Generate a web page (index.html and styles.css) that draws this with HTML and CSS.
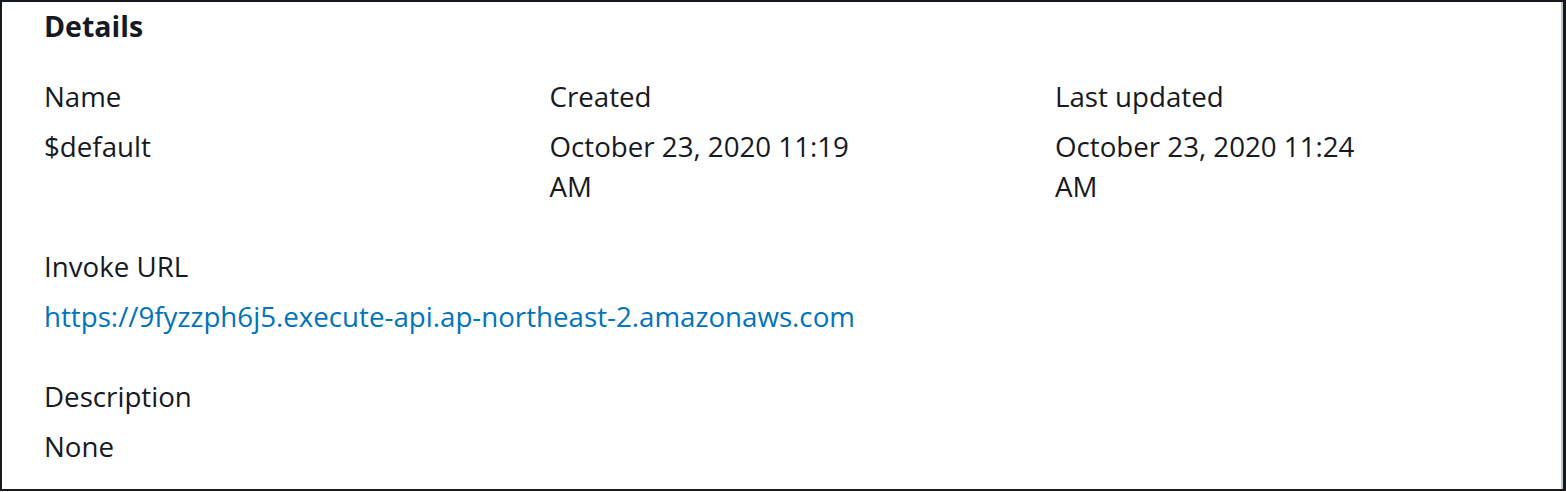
FILE: index.html
```html
<!DOCTYPE html>
<html lang="en">
<head>
<meta charset="utf-8">
<title>Details</title>
<link rel="stylesheet" href="styles.css">
</head>
<body>
<div class="frame">
  <section class="panel">
    <h2 class="title">Details</h2>
    <div class="grid">
      <div class="kv">
        <div class="label">Name</div>
        <div class="value">$default</div>
      </div>
      <div class="kv">
        <div class="label">Created</div>
        <div class="value">October 23, 2020 11:19 AM</div>
      </div>
      <div class="kv">
        <div class="label">Last updated</div>
        <div class="value">October 23, 2020 11:24 AM</div>
      </div>
      <div class="kv full">
        <div class="label">Invoke URL</div>
        <div class="value"><a class="link" href="#">https://9fyzzph6j5.execute-api.ap-northeast-2.amazonaws.com</a></div>
      </div>
      <div class="kv full">
        <div class="label">Description</div>
        <div class="value">None</div>
      </div>
    </div>
  </section>
</div>
</body>
</html>
```
FILE: styles.css
```css
html, body {
  margin: 0;
  padding: 0;
  background: #ffffff;
}
body {
  font-family: "Open Sans", "Noto Sans", sans-serif;
  color: #16191f;
}
.frame {
  box-sizing: border-box;
  width: 1566px;
  height: 491px;
  border: 2px solid #16191f;
  border-right-width: 3px;
  background: #fff;
}
.panel {
  box-sizing: border-box;
  height: 100%;
  padding: 0 0 0 42px;
  border-right: 2px solid #c4c7c9;
}
.title {
  margin: 0;
  font-size: 28.5px;
  font-weight: 700;
  line-height: 48px;
  height: 74px;
  box-sizing: border-box;
}
.grid {
  display: grid;
  grid-template-columns: 330px 330px 330px;
  column-gap: 175.5px;
  row-gap: 40px;
  font-size: 27.7px;
  line-height: 40px;
}
.kv.full {
  grid-column: 1 / -1;
}
.label {
  margin-bottom: 10px;
}
.link {
  color: #0073bb;
  text-decoration: none;
}
```
